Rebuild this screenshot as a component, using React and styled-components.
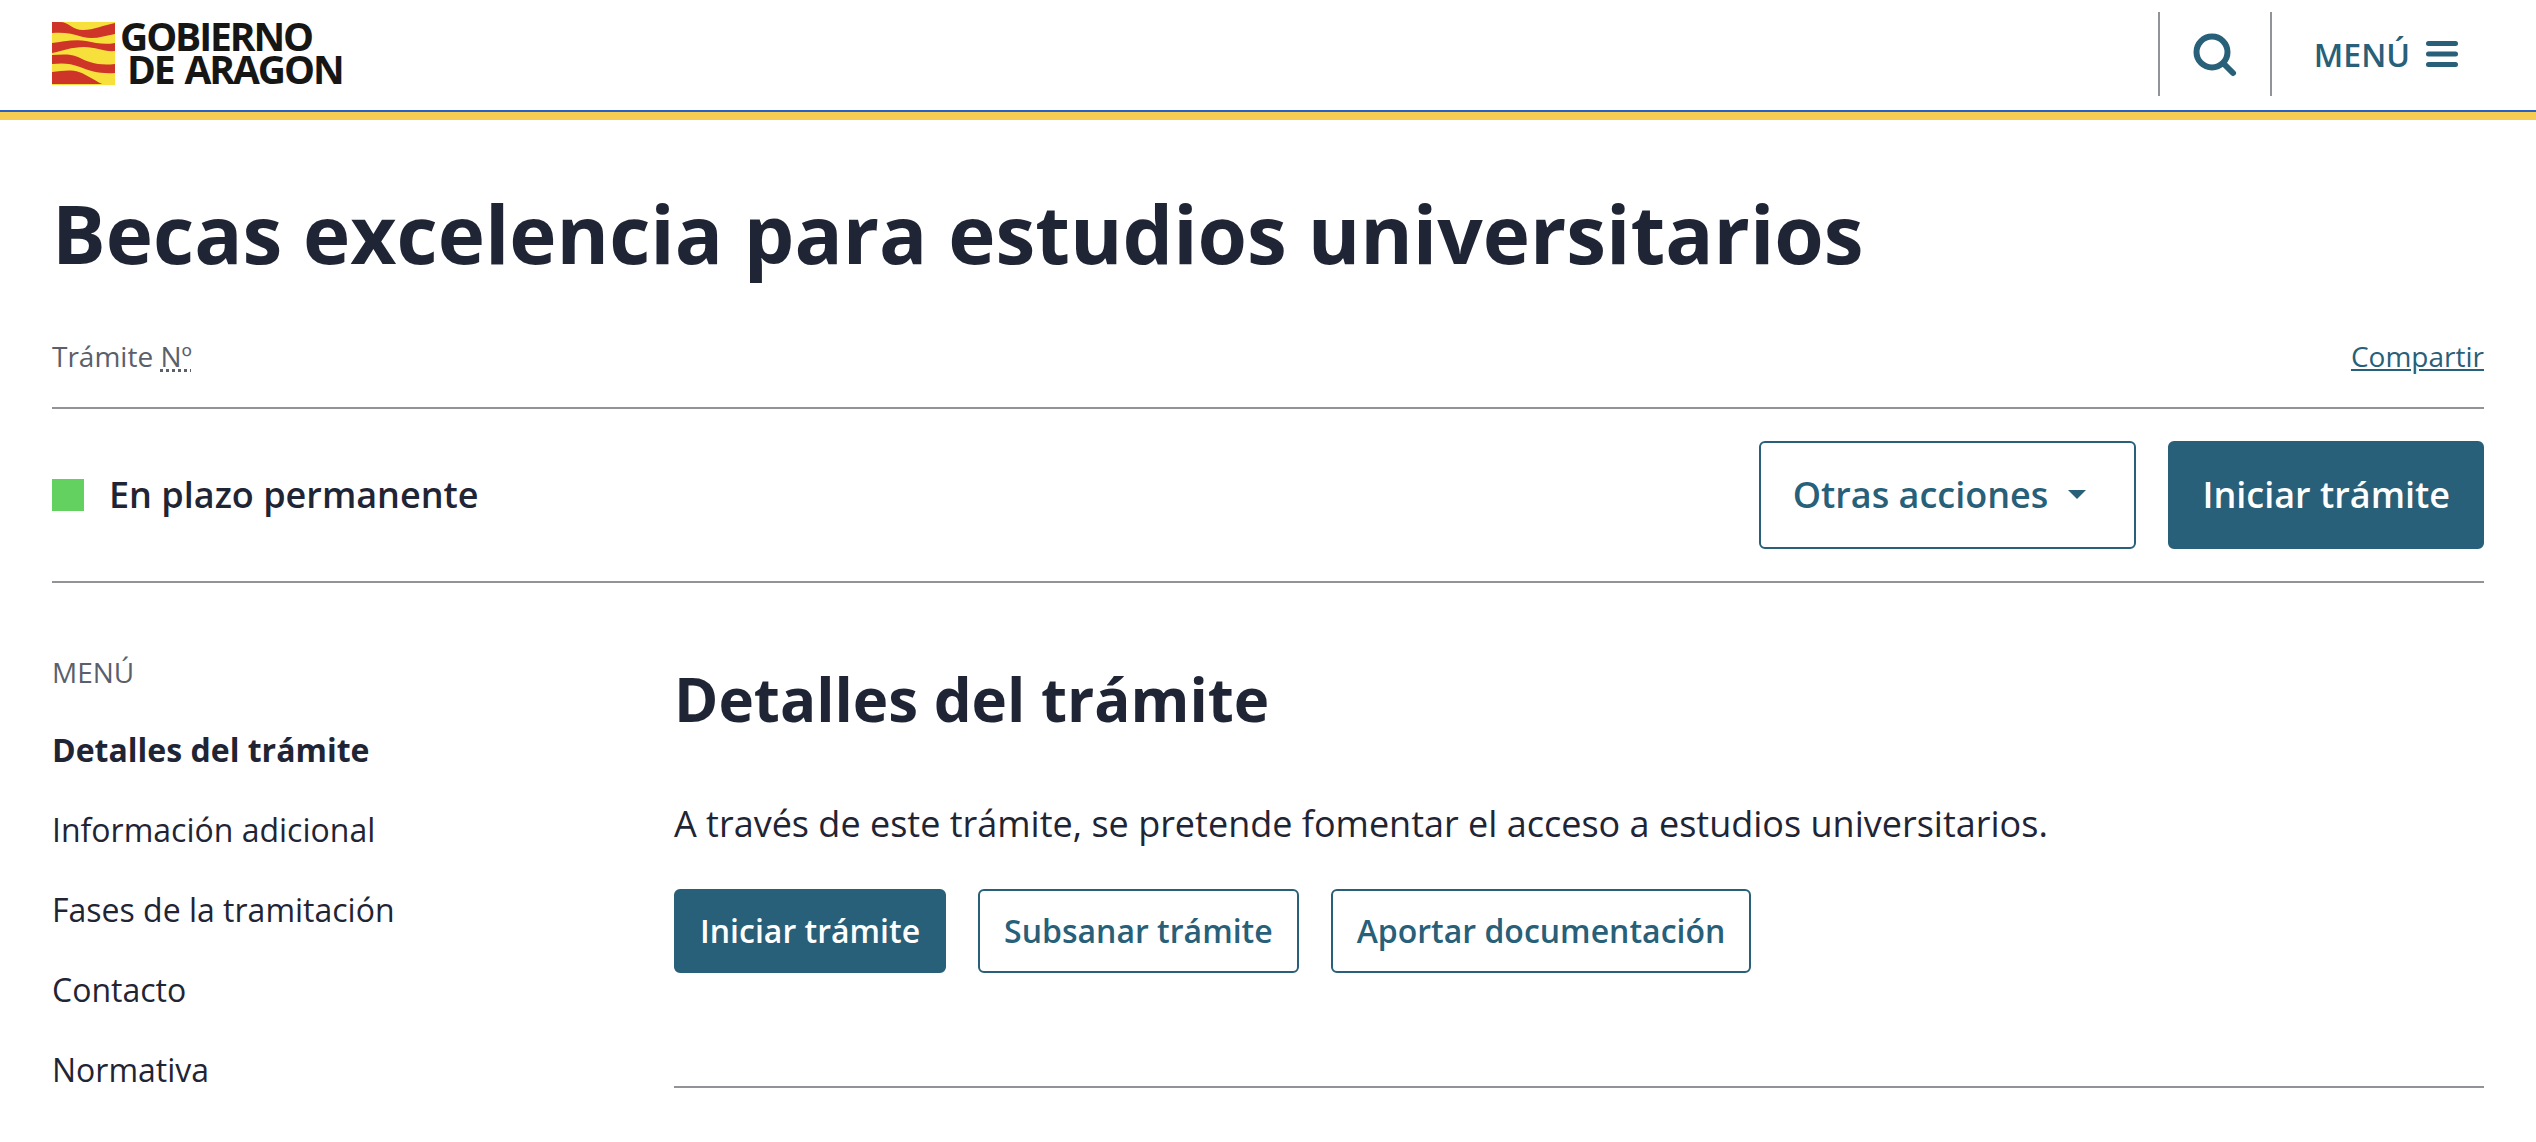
import React from "react";
import styled, { createGlobalStyle } from "styled-components";

const Global = createGlobalStyle`
  html, body {
    margin: 0;
    padding: 0;
    background: #fff;
    font-family: "Open Sans", "Noto Sans", sans-serif;
    color: #1f2535;
    overflow: hidden;
  }
  * { box-sizing: border-box; }
`;

const primary = "#285f79";
const rule = "#929299";

const Flag = () => (
  <FlagSvg viewBox="0 0 63 63" aria-hidden="true">
    <rect width="63" height="63" fill="#f7e03c" />
    <path
      fill="#cf3429"
      d="M0 0H8C17 0 20 8 31 8C42 8 52 3 63 1V12C52 14 42 18 31 15C20 11 10 10 0 11Z"
    />
    <path
      fill="#cf3429"
      d="M0 21C10 20 22 17 34 19C44 21 52 23 63 21V29C52 30 44 25 32 25C20 25 10 29 0 31Z"
    />
    <path
      fill="#cf3429"
      d="M0 33C8 33 16 31 26 35C36 40 46 44 63 42V51C48 52 38 49 28 45C18 41 10 41 0 42Z"
    />
    <path
      fill="#cf3429"
      d="M0 50C10 49 18 47 27 50C36 53 44 60 53 63H0Z"
    />
    <rect y="62" width="63" height="1" fill="#f7e03c" />
  </FlagSvg>
);

const SearchIcon = () => (
  <IconSvg width="46" height="46" viewBox="0 0 46 46" aria-hidden="true">
    <circle cx="20" cy="20" r="15.5" fill="none" stroke={primary} strokeWidth="6" />
    <path d="M32 32L41 41" fill="none" stroke={primary} strokeWidth="6" strokeLinecap="round" />
  </IconSvg>
);

const MenuIcon = () => (
  <IconSvg width="32" height="26" viewBox="0 0 32 26" aria-hidden="true">
    <path
      d="M2.5 2.5H29.5M2.5 13H29.5M2.5 23.5H29.5"
      fill="none"
      stroke={primary}
      strokeWidth="5"
      strokeLinecap="round"
    />
  </IconSvg>
);

const App = () => {
  return (
    <>
      <Global />
      <Header>
        <Logo>
          <Flag />
          <Wordmark>
            <span>GOBIERNO</span>
            <span>DE ARAGON</span>
          </Wordmark>
        </Logo>
        <HeaderActions>
          <SearchButton>
            <SearchIcon />
          </SearchButton>
          <MenuButton>
            MENÚ
            <MenuIcon />
          </MenuButton>
        </HeaderActions>
      </Header>
      <Stripe />
      <Page>
        <Title>Becas excelencia para estudios universitarios</Title>
        <MetaRow>
          <Meta>
            Trámite <Abbr title="Número">Nº</Abbr>
          </Meta>
          <ShareLink href="#">Compartir</ShareLink>
        </MetaRow>
        <StatusRow>
          <Status>
            <StatusDot />
            <span>En plazo permanente</span>
          </Status>
          <StatusActions>
            <Button $size="large">
              Otras acciones
              <Caret />
            </Button>
            <Button $size="large" $solid>
              Iniciar trámite
            </Button>
          </StatusActions>
        </StatusRow>
        <Columns>
          <SideNav>
            <NavLabel>MENÚ</NavLabel>
            <NavItem $active>Detalles del trámite</NavItem>
            <NavItem>Información adicional</NavItem>
            <NavItem>Fases de la tramitación</NavItem>
            <NavItem>Contacto</NavItem>
            <NavItem>Normativa</NavItem>
          </SideNav>
          <Content>
            <SectionTitle>Detalles del trámite</SectionTitle>
            <Lead>
              A través de este trámite, se pretende fomentar el acceso a estudios
              universitarios.
            </Lead>
            <ButtonRow>
              <Button $solid>Iniciar trámite</Button>
              <Button>Subsanar trámite</Button>
              <Button>Aportar documentación</Button>
            </ButtonRow>
          </Content>
        </Columns>
      </Page>
    </>
  );
};

export default App;

const Header = styled.header`
  height: 112px;
  padding: 12px 52px 14px;
  display: flex;
  align-items: stretch;
  justify-content: space-between;
  border-bottom: 2px solid #2a5fc4;
`;

const Stripe = styled.div`
  height: 8px;
  background: #f6cc52;
`;

const Logo = styled.div`
  display: flex;
  align-items: center;
  gap: 5px;
  margin-top: -2px;
`;

const FlagSvg = styled.svg`
  width: 63px;
  height: 63px;
  display: block;
`;

const Wordmark = styled.div`
  display: flex;
  flex-direction: column;
  font-weight: 700;
  font-size: 39px;
  line-height: 33px;
  letter-spacing: -2.1px;
  word-spacing: 3px;
  color: #161615;
  white-space: nowrap;

  span:first-child {
    margin-top: -2px;
  }

  span:last-child {
    margin-left: 7px;
  }
`;

const HeaderActions = styled.div`
  display: flex;
  align-items: stretch;
`;

const IconSvg = styled.svg`
  display: block;
  flex: none;
`;

const SearchButton = styled.div`
  width: 114px;
  display: flex;
  align-items: center;
  justify-content: center;
  border-left: 2px solid ${rule};
  border-right: 2px solid ${rule};
  padding-top: 1px;
`;

const MenuButton = styled.div`
  display: flex;
  align-items: center;
  gap: 16px;
  padding: 0 26px 0 42px;
  font-size: 32px;
  font-weight: 600;
  color: ${primary};
`;

const Page = styled.main`
  padding: 0 52px;
`;

const Title = styled.h1`
  margin: 0;
  padding-top: 63px;
  height: 200px;
  font-size: 80px;
  line-height: 100px;
  font-weight: 700;
  white-space: nowrap;
`;

const MetaRow = styled.div`
  height: 89px;
  padding-bottom: 15px;
  display: flex;
  align-items: center;
  justify-content: space-between;
  border-bottom: 2px solid ${rule};
`;

const Meta = styled.div`
  font-size: 28px;
  color: #5b5f6c;
`;

const Abbr = styled.abbr`
  text-decoration: underline dotted;
`;

const ShareLink = styled.a`
  font-size: 28px;
  color: ${primary};
  text-decoration: underline;
`;

const StatusRow = styled.div`
  height: 174px;
  display: flex;
  align-items: center;
  justify-content: space-between;
  border-bottom: 2px solid ${rule};
`;

const Status = styled.div`
  display: flex;
  align-items: center;
  gap: 25px;
  font-size: 36px;
  font-weight: 600;

  span:last-child {
    padding-bottom: 2px;
  }
`;

const StatusDot = styled.span`
  width: 32px;
  height: 32px;
  background: #63d15f;
`;

const StatusActions = styled.div`
  display: flex;
  gap: 32px;
`;

const Button = styled.button`
  display: inline-flex;
  align-items: center;
  justify-content: center;
  height: ${(p) => (p.$size === "large" ? "108px" : "84px")};
  padding: ${(p) => (p.$size === "large" ? "0 32px 2px" : "0 24px 2px")};
  font-family: inherit;
  font-size: ${(p) => (p.$size === "large" ? "36px" : "32px")};
  font-weight: 600;
  color: ${(p) => (p.$solid ? "#fff" : primary)};
  background: ${(p) => (p.$solid ? primary : "#fff")};
  border: 2px solid ${primary};
  border-radius: 6px;
  white-space: nowrap;
`;

const Caret = styled.span`
  margin-left: 20px;
  margin-right: 16px;
  width: 0;
  height: 0;
  border-left: 9px solid transparent;
  border-right: 9px solid transparent;
  border-top: 9px solid ${primary};
`;

const Columns = styled.div`
  display: grid;
  grid-template-columns: 622px 1fr;
`;

const SideNav = styled.nav`
  padding-top: 70px;
  display: flex;
  flex-direction: column;
`;

const NavLabel = styled.div`
  height: 38px;
  line-height: 38px;
  font-size: 28px;
  color: #5b5f6c;
  margin-bottom: 37px;
`;

const NavItem = styled.div`
  height: 80px;
  line-height: 44px;
  font-size: 32px;
  font-weight: ${(p) => (p.$active ? 700 : 400)};
  color: #1f2535;
`;

const Content = styled.section`
  padding-top: 76px;
  height: 505px;
  border-bottom: 2px solid ${rule};
`;

const SectionTitle = styled.h2`
  margin: 0 0 60px;
  font-size: 60px;
  line-height: 80px;
  font-weight: 700;
`;

const Lead = styled.p`
  margin: 0 0 40px;
  font-size: 36px;
  line-height: 50px;
  white-space: nowrap;
`;

const ButtonRow = styled.div`
  display: flex;
  gap: 32px;
`;
